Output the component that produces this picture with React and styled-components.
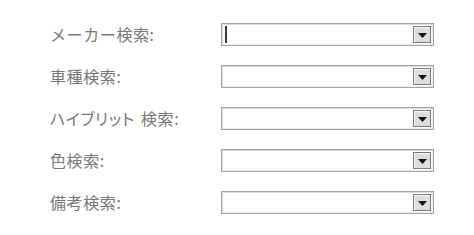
import React from 'react'
import styled, { createGlobalStyle } from 'styled-components'

const GlobalStyle = createGlobalStyle`
  body {
    margin: 0;
    background: #fff;
    font-family: "Noto Sans CJK JP", "Noto Sans", sans-serif;
  }
`

const Form = styled.div`
  display: grid;
  grid-template-columns: 171px 213px;
  row-gap: 19px;
  padding: 23px 0 0 50px;
  align-items: center;
`

const Label = styled.label`
  font-size: 16px;
  color: #787878;
  line-height: 23px;
  letter-spacing: 0.6px;
  word-spacing: ${({ $tight }) => ($tight ? '2px' : '0')};
  font-feature-settings: ${({ $tight }) => ($tight ? '"palt"' : 'normal')};
`

const SelectBox = styled.div`
  height: 23px;
  box-sizing: border-box;
  border: 1px solid #a3a3a3;
  box-shadow: inset 1px 1px 0 #dcdcdc, inset -1px -1px 0 #efefef;
  background: #fff;
  display: flex;
  align-items: center;
  justify-content: space-between;
  padding: 0 2px 0 3px;
`

const Caret = styled.span`
  width: 2px;
  height: 17px;
  background: ${({ $show }) => ($show ? '#3a3a3a' : 'transparent')};
`

const DropButton = styled.span`
  width: 18px;
  height: 17px;
  box-sizing: border-box;
  border: 1px solid #7a7a7a;
  box-shadow: inset 1px 1px 0 #f6f6f6;
  background: #dddddd;
  display: flex;
  align-items: center;
  justify-content: center;
  padding-top: 2px;
`

const Arrow = () => (
  <svg width="9" height="5" viewBox="0 0 9 5">
    <path d="M0 0h9L4.5 5z" fill="#111" />
  </svg>
)

const fields = [
  { text: 'メーカー検索:' },
  { text: '車種検索:' },
  { text: 'ハイブリット 検索:', tight: true },
  { text: '色検索:' },
  { text: '備考検索:' },
]

export default function App() {
  return (
    <>
      <GlobalStyle />
      <Form>
        {fields.map((f, i) => (
          <React.Fragment key={f.text}>
            <Label $tight={f.tight}>{f.text}</Label>
            <SelectBox>
              <Caret $show={i === 0} />
              <DropButton>
                <Arrow />
              </DropButton>
            </SelectBox>
          </React.Fragment>
        ))}
      </Form>
    </>
  )
}
